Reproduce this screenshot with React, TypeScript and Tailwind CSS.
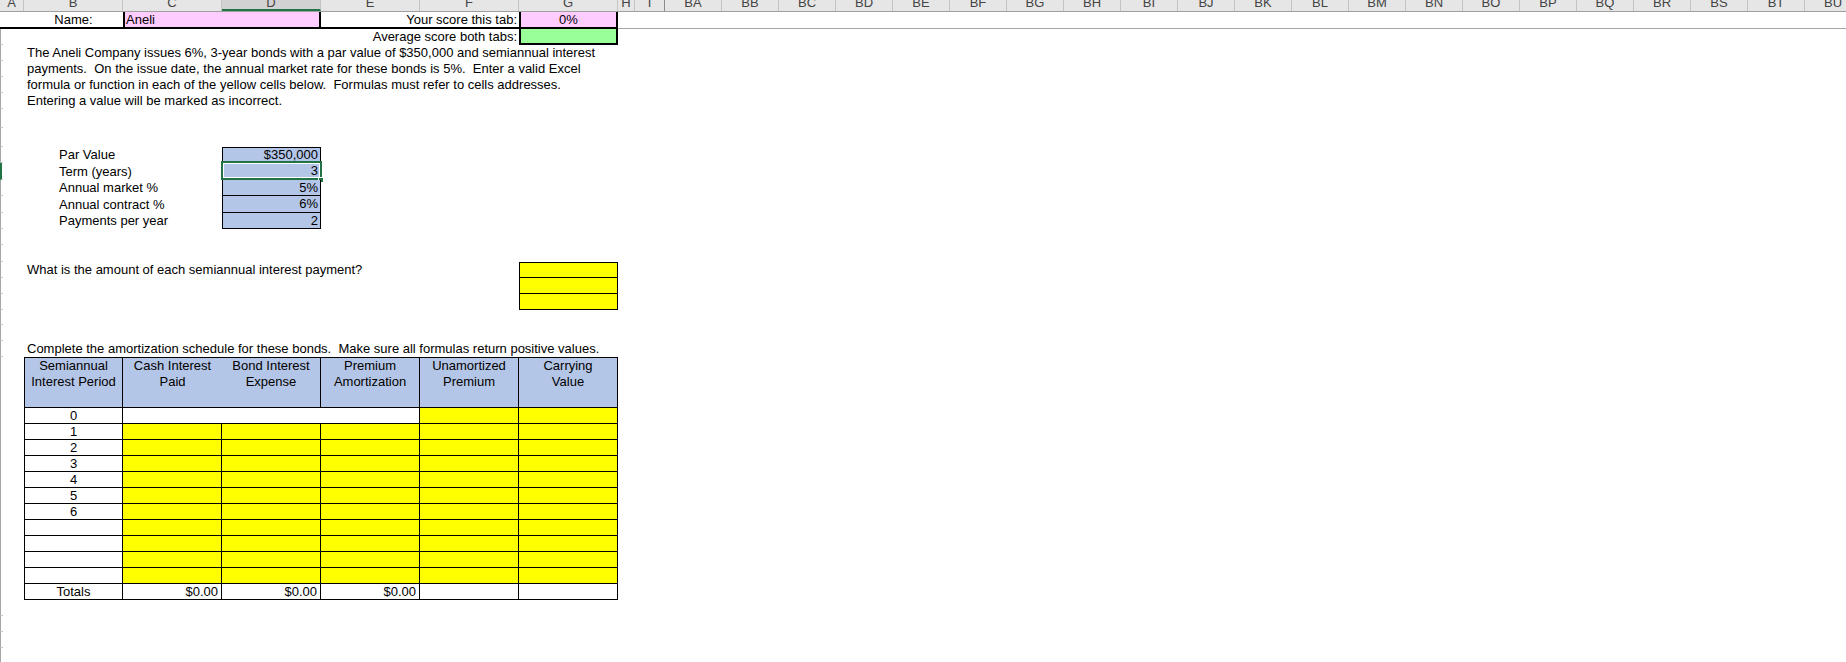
import React from 'react';

const font = "font-['Liberation_Sans',Arial,sans-serif]";

const extra = ['BA', 'BB', 'BC', 'BD', 'BE', 'BF', 'BG', 'BH', 'BI', 'BJ', 'BK', 'BL', 'BM', 'BN', 'BO', 'BP', 'BQ', 'BR', 'BS', 'BT', 'BU'];

const headCols = [
  { l: 'A', w: 'w-[24px]' },
  { l: 'B', w: 'w-[99px]' },
  { l: 'C', w: 'w-[99px]' },
  { l: 'D', w: 'w-[99px]', sel: true },
  { l: 'E', w: 'w-[99px]' },
  { l: 'F', w: 'w-[99px]' },
  { l: 'G', w: 'w-[99px]' },
  { l: 'H', w: 'w-[17px]' },
  { l: 'I', w: 'w-[30px]', freeze: true },
  ...extra.map((l) => ({ l, w: 'w-[57px]' })),
];

function ColumnHeader() {
  return (
    <div className="flex h-[12px] border-b border-[#9f9f9f] bg-[#e6e6e6] overflow-hidden">
      {headCols.map((c) => (
        <div
          key={c.l}
          className={`${c.w} shrink-0 h-full overflow-hidden text-center text-[13px] leading-[13px] text-[#444] border-r ${
            c.freeze ? 'border-[#8a8a8a]' : 'border-[#c4c4c4]'
          } ${c.sel ? 'bg-[#d2d2d2] border-b-2 border-b-[#217346]' : ''}`}
        >
          <div className="-mt-[4px]">{c.l}</div>
        </div>
      ))}
    </div>
  );
}

function Row({ h, sel, children }: { h: string; sel?: boolean; children?: React.ReactNode }) {
  return (
    <div className={`flex ${h}`}>
      <div
        className={`w-[3px] shrink-0 border-l border-b ${
          sel ? 'border-l-[#217346] border-l-2 border-b-[#c8c8c8]' : 'border-l-[#a6a6a6] border-b-[#c8c8c8]'
        }`}
      />
      <div className="w-[21px] shrink-0" />
      {children}
    </div>
  );
}

const cell = 'shrink-0 flex items-center text-[13px] leading-[16px] text-black whitespace-nowrap';

const params = [
  { label: 'Par Value', value: '$350,000', h: 'h-[16px]', top: true },
  { label: 'Term (years)', value: '3', h: 'h-[17px]', sel: true },
  { label: 'Annual market %', value: '5%', h: 'h-[16px]' },
  { label: 'Annual contract %', value: '6%', h: 'h-[17px]' },
  { label: 'Payments per year', value: '2', h: 'h-[16px]' },
];

const intro = [
  'The Aneli Company issues 6%, 3-year bonds with a par value of $350,000 and semiannual interest',
  'payments.  On the issue date, the annual market rate for these bonds is 5%.  Enter a valid Excel',
  'formula or function in each of the yellow cells below.  Formulas must refer to cells addresses.',
  'Entering a value will be marked as incorrect.',
];

const periods = ['1', '2', '3', '4', '5', '6', '', '', '', ''];

function TableHeader() {
  const th = 'shrink-0 w-[99px] border-b border-black bg-[#b4c6e7] text-center text-[13px] leading-[16px] text-black';
  return (
    <div className="flex h-[50px]">
      <div className={`${th} border-l border-r`}>
        Semiannual
        <br />
        Interest Period
      </div>
      <div className={th}>
        Cash Interest
        <br />
        Paid
      </div>
      <div className={`${th} border-r`}>
        Bond Interest
        <br />
        Expense
      </div>
      <div className={`${th} border-r`}>
        Premium
        <br />
        Amortization
      </div>
      <div className={`${th} border-r`}>
        Unamortized
        <br />
        Premium
      </div>
      <div className={`${th} border-r`}>
        Carrying
        <br />
        Value
      </div>
    </div>
  );
}

export default function App() {
  const td = `${cell} w-[99px] border-r border-b border-black`;
  return (
    <div className={`${font} w-[1846px] h-[662px] bg-white overflow-hidden`}>
      <ColumnHeader />

      {/* row 1 */}
      <div className="flex h-[17px]">
        <div className="w-[24px] shrink-0 border-b-2 border-black" />
        <div className={`${cell} w-[99px] justify-center border-b-2 border-black`}>Name:</div>
        <div className={`${cell} w-[198px] bg-[#ffccff] border-x-2 border-b-2 border-black pl-[1px]`}>Aneli</div>
        <div className={`${cell} w-[198px] justify-end pr-[2px] border-b-2 border-black`}>Your score this tab:</div>
        <div className={`${cell} w-[99px] justify-center bg-[#ffccff] border-x-2 border-b-2 border-black`}>0%</div>
        <div className="flex-1 border-b border-[#a6a6a6]" />
      </div>

      {/* row 2 */}
      <Row h="h-[16px]">
        <div className="w-[297px] shrink-0" />
        <div className={`${cell} w-[198px] justify-end pr-[2px]`}>Average score both tabs:</div>
        <div className="w-[99px] shrink-0 bg-[#99ff99] border-x-2 border-b-2 border-black" />
      </Row>

      {intro.map((line) => (
        <Row key={line} h="h-[16px]">
          <div className={`${cell} pl-[3px] whitespace-pre`}>{line}</div>
        </Row>
      ))}

      <Row h="h-[19px]" />
      <Row h="h-[19px]" />

      {params.map((p) => (
        <Row key={p.label} h={p.h} sel={p.sel}>
          <div className={`${cell} w-[99px] pl-[35px]`}>{p.label}</div>
          <div className="w-[99px] shrink-0" />
          <div
            className={`${cell} relative w-[99px] justify-end pr-[2px] bg-[#b4c6e7] border-x border-b border-black ${
              p.top ? 'border-t' : ''
            }`}
          >
            {p.value}
            {p.sel && (
              <>
                <div className="absolute -left-[2px] -top-[2px] -right-[2px] -bottom-[1px] border-2 border-[#217346] shadow-[inset_0_0_0_1px_#ffffff]" />
                <div className="absolute -right-[4px] -bottom-[4px] w-[6px] h-[6px] bg-[#217346] border border-white" />
              </>
            )}
          </div>
        </Row>
      ))}

      <Row h="h-[16px]" />
      <Row h="h-[17px]" />

      {[0, 1, 2].map((i) => (
        <Row key={i} h="h-[16px]">
          <div className={`${cell} w-[495px] pl-[3px]`}>
            {i === 0 ? 'What is the amount of each semiannual interest payment?' : ''}
          </div>
          <div
            className={`w-[99px] shrink-0 bg-[#ffff00] border-x border-b border-black ${i === 0 ? 'border-t' : ''}`}
          />
        </Row>
      ))}

      <Row h="h-[15px]" />
      <Row h="h-[16px]" />

      <Row h="h-[16px]">
        <div className={`${cell} pl-[3px] whitespace-pre`}>
          Complete the amortization schedule for these bonds.  Make sure all formulas return positive values.
        </div>
      </Row>

      {/* amortization table */}
      <div className="flex">
        <div className="w-[3px] shrink-0 border-l border-[#a6a6a6]" />
        <div className="w-[21px] shrink-0" />
        <div className="flex flex-col border-t border-black">
          <TableHeader />
          <div className="flex h-[16px]">
            <div className={`${td} border-l justify-center`}>0</div>
            <div className={`${cell} w-[297px] border-r border-b border-black`} />
            <div className={`${td} bg-[#ffff00]`} />
            <div className={`${td} bg-[#ffff00]`} />
          </div>
          {periods.map((p, i) => (
            <div key={i} className="flex h-[16px]">
              <div className={`${td} border-l justify-center`}>{p}</div>
              <div className={`${td} bg-[#ffff00]`} />
              <div className={`${td} bg-[#ffff00]`} />
              <div className={`${td} bg-[#ffff00]`} />
              <div className={`${td} bg-[#ffff00]`} />
              <div className={`${td} bg-[#ffff00]`} />
            </div>
          ))}
          <div className="flex h-[16px]">
            <div className={`${td} border-l justify-center`}>Totals</div>
            <div className={`${td} justify-end pr-[3px]`}>$0.00</div>
            <div className={`${td} justify-end pr-[3px]`}>$0.00</div>
            <div className={`${td} justify-end pr-[3px]`}>$0.00</div>
            <div className={td} />
            <div className={td} />
          </div>
        </div>
      </div>

      <Row h="h-[16px]" />
      <Row h="h-[16px]" />
      <Row h="h-[16px]" />
      <Row h="h-[16px]" />
    </div>
  );
}
